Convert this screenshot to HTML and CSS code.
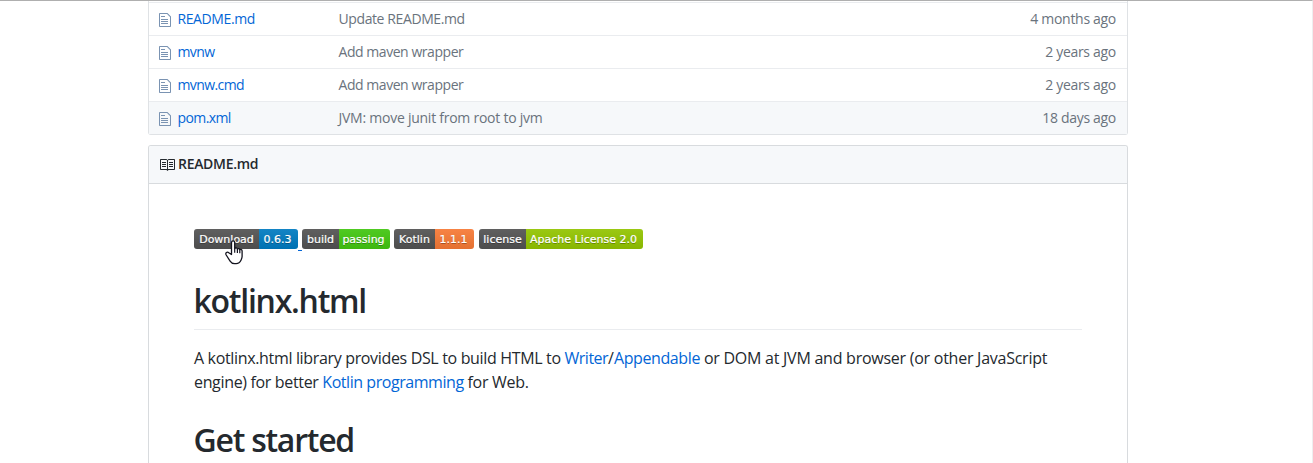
FILE: index.html
```html
<!DOCTYPE html>
<html lang="en">
<head>
<meta charset="utf-8">
<title>kotlinx.html</title>
<link rel="stylesheet" href="styles.css">
</head>
<body>
<svg class="defs" width="0" height="0">
  <symbol id="file" viewBox="0 0 12 16"><path d="M6 5H2V4h4v1zM2 8h7V7H2v1zm0 2h7V9H2v1zm0 2h7v-1H2v1zm10-7.5V14c0 .55-.45 1-1 1H1c-.55 0-1-.45-1-1V2c0-.55.45-1 1-1h7.5L12 4.500zM11 5L8 2H1v12h10V5z"/></symbol>
</svg>
<main class="page">
  <section class="files">
    <div class="row"><svg class="file"><use href="#file"/></svg><a class="name t40">README.md</a><span class="msg t40">Update README.md</span><span class="age">4 months ago</span></div>
    <div class="row"><svg class="file"><use href="#file"/></svg><a class="name t60">mvnw</a><span class="msg t45">Add maven wrapper</span><span class="age">2 years ago</span></div>
    <div class="row"><svg class="file"><use href="#file"/></svg><a class="name t60">mvnw.cmd</a><span class="msg t45">Add maven wrapper</span><span class="age">2 years ago</span></div>
    <div class="row hover"><svg class="file"><use href="#file"/></svg><a class="name t60">pom.xml</a><span class="msg t25">JVM: move junit from root to jvm</span><span class="age">18 days ago</span></div>
  </section>
  <section class="readme">
    <header class="head"><svg class="book" viewBox="0 0 16 16"><path d="M3 5h4v1H3V5zm0 3h4V7H3v1zm0 2h4V9H3v1zm11-5h-4v1h4V5zm0 2h-4v1h4V7zm0 2h-4v1h4V9zm2-6v9c0 .55-.45 1-1 1H9.500l-1 1-1-1H2c-.55 0-1-.45-1-1V3c0-.55.45-1 1-1h5.500l1 1 1-1H15c.55 0 1 .45 1 1zm-8 .5L7.500 3H2v9h6V3.500zm7-.5H9.500l-.5.500V12h6V3z"/></svg><span class="t30">README.md</span></header>
    <article class="body">
      <div class="badges">
        <span class="badge b1"><span class="k">Download</span><span class="v blue">0.6.3</span></span>
        <span class="link-gap"></span>
        <span class="badge b2"><span class="k">build</span><span class="v green">passing</span></span>
        <span class="badge b3"><span class="k">Kotlin</span><span class="v orange">1.1.1</span></span>
        <span class="badge b4"><span class="k">license</span><span class="v lime">Apache License 2.0</span></span>
      </div>
      <h1>kotlinx.html</h1>
      <p><span class="t34">A kotlinx.html library provides DSL to build HTML to </span><a class="t50">Writer</a>/<a class="t40">Appendable</a><span class="t25"> or DOM at JVM and browser (or other JavaScript</span><br><span class="t34">engine) for better </span><a class="t45">Kotlin programming</a><span class="t30"> for Web.</span></p>
      <h1 class="second">Get started</h1>
    </article>
  </section>
</main>
<svg class="cursor" viewBox="0 0 18 25"><path d="M6.500 14.500V2.600c0-2.400 3.200-2.400 3.200 0v6c.5-1 2.500-.9 2.700.4.8-.8 2.200-.4 2.400.7 1.100-.6 2.300 0 2.300 1.300v5.500c0 1.400-.5 2.400-1 3.500-1 2.300-2.500 3.700-5 3.700H9.600c-2 0-3.400-.9-4.500-2.600L1.200 15c-1.200-2 1-3.700 2.600-2.300z" fill="#fff" stroke="#14141f" stroke-width="1.300" stroke-linejoin="round"/><path d="M9.700 8.500v4.300M12.400 9v4M14.800 9.700v3.600" fill="none" stroke="#14141f" stroke-width="1.200"/></svg>
</body>
</html>
```
FILE: styles.css
```css
* { box-sizing: border-box; }
body { margin: 0; height: 463px; overflow: hidden; border-top: 1px solid #afafaf; border-right: 1px solid #eeeeef; background: #fff; color: #24292e; font-family: "Open Sans", sans-serif; }
.defs { display: block; }
a { color: #0366d6; }

/* tracking steps */
.t25 { letter-spacing: -.25px; }
.t30 { letter-spacing: -.3px; }
.t34 { letter-spacing: -.34px; }
.t40 { letter-spacing: -.4px; }
.t45 { letter-spacing: -.45px; }
.t50 { letter-spacing: -.5px; }
.t60 { letter-spacing: -.6px; }

.page { display: flex; flex-direction: column; width: 980px; height: 462px; margin-left: 148px; }
.files { border: 1px solid #dfe2e5; border-top: 0; border-radius: 0 0 3px 3px; padding-top: 1px; }
.row { display: flex; align-items: center; height: 33px; border-top: 1px solid #eaecef; padding: 0 11px 0 10px; font-size: 14px; line-height: 20px; color: #6a737d; }
.row.hover { background: #f6f8fa; }
.file { width: 12px; height: 16px; margin: 2px 6.500px 0 0; fill: #7a93b2; }
.name { width: 161px; }
.msg { flex: 1; }
.age { letter-spacing: -.3px; }

.readme { flex: 1; min-height: 0; margin-top: 10px; border: 1px solid #d8dbde; border-bottom: 0; border-radius: 3px 3px 0 0; overflow: hidden; }
.head { display: flex; align-items: center; height: 38px; padding: 0 0 1px 10px; background: #f6f8fa; border-bottom: 1px solid #d8dbde; font-size: 14px; line-height: 20px; font-weight: 600; }
.head span { padding-bottom: 1px; }
.book { width: 16px; height: 16px; margin: 1px 3px 0 0; fill: #24292e; }
.body { padding: 45px 45px 0; }

.badges { display: flex; height: 20px; }
.badge { display: grid; height: 20px; margin-right: 4px; border-radius: 3px; overflow: hidden; color: #fff; text-align: center; text-shadow: 0 1px 0 rgba(1, 1, 1, .3); -webkit-text-stroke: .2px #fff; font: 11px/20px "DejaVu Sans", sans-serif; }
.b1 { grid-template-columns: 65px 39px; margin-right: 0; }
.b2 { grid-template-columns: 37px 51px; }
.b3 { grid-template-columns: 41px 39px; margin-right: 5px; }
.b4 { grid-template-columns: 47px 117px; }
.link-gap { width: 4px; height: 22px; border-bottom: 1px solid #0366d6; }
.k, .v { height: 20px; padding-top: 1px; background-image: linear-gradient(rgba(187, 187, 187, .1), rgba(0, 0, 0, .1)); white-space: nowrap; }
.k { background-color: #555; }
.v { padding-right: 2px; }
.blue { background-color: #007ec6; }
.green { background-color: #4c1; }
.orange { background-color: #fe7d37; }
.lime { background-color: #97ca00; }

h1 { height: 49px; margin: 32px 0 16px; border-bottom: 1px solid #eaecef; font-size: 32px; font-weight: 600; line-height: 40px; letter-spacing: -1.25px; text-indent: -.5px; }
.second { margin-top: 26px; margin-bottom: 0; height: 40px; border: 0; }
p { margin: 0; font-size: 16px; line-height: 24px; white-space: nowrap; }

.cursor { position: absolute; left: 225px; top: 240px; width: 18px; height: 25px; }
```
